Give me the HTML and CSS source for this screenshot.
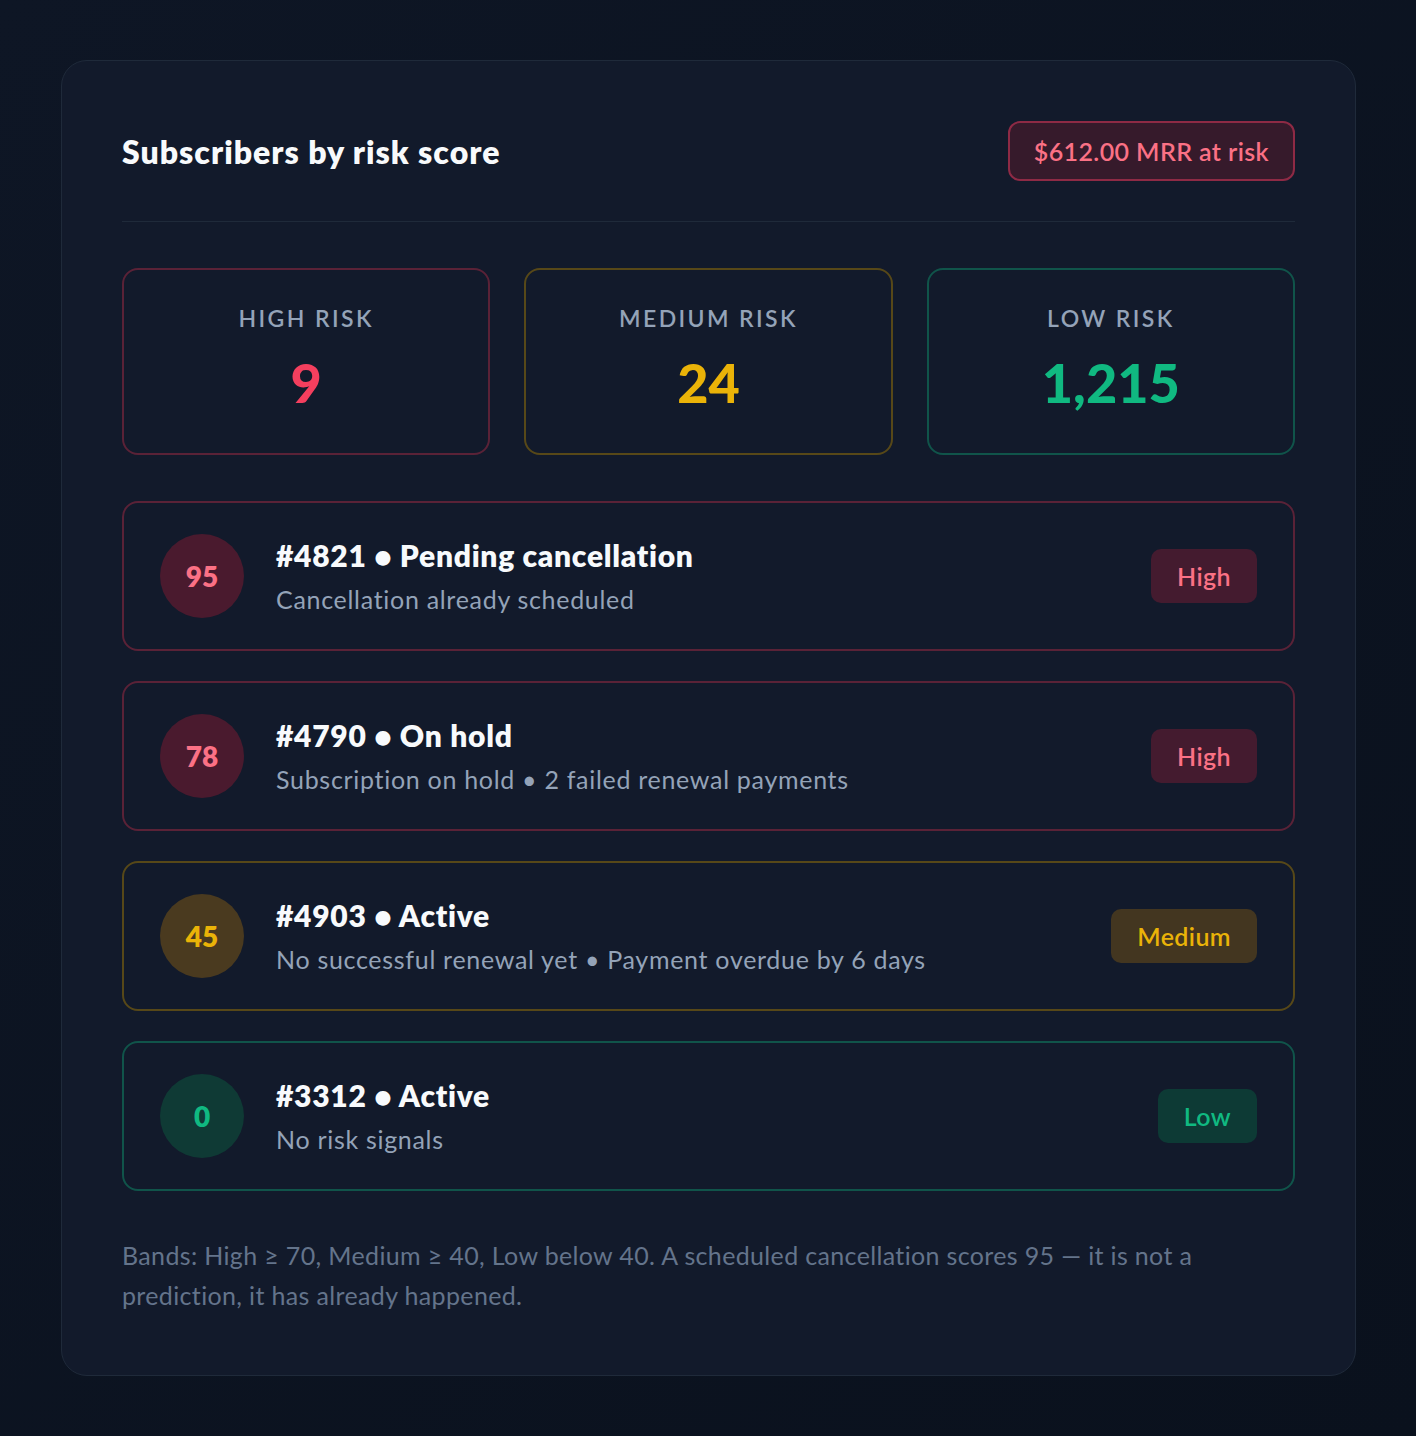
FILE: index.html
```html
<html>
<head>
  <meta charset="utf-8">
  <title>Subscribers by risk score</title>
  <link rel="stylesheet" href="styles.css">
</head>
<body>
<div class="panel">
  <div class="panel-head">
    <h1>Subscribers by risk score</h1>
    <span class="mrr">$612.00 MRR at risk</span>
  </div>

  <div class="stats">
    <div class="stat high">
      <div class="stat-label">High risk</div>
      <div class="stat-value">9</div>
    </div>
    <div class="stat medium">
      <div class="stat-label">Medium risk</div>
      <div class="stat-value">24</div>
    </div>
    <div class="stat low">
      <div class="stat-label">Low risk</div>
      <div class="stat-value">1,215</div>
    </div>
  </div>

  <div class="subs">
    <div class="sub high">
      <div class="score">95</div>
      <div class="sub-info">
        <div class="sub-title">#4821 &bull; Pending cancellation</div>
        <div class="sub-reason">Cancellation already scheduled</div>
      </div>
      <span class="band">High</span>
    </div>
    <div class="sub high">
      <div class="score">78</div>
      <div class="sub-info">
        <div class="sub-title">#4790 &bull; On hold</div>
        <div class="sub-reason">Subscription on hold &bull; 2 failed renewal payments</div>
      </div>
      <span class="band">High</span>
    </div>
    <div class="sub medium">
      <div class="score">45</div>
      <div class="sub-info">
        <div class="sub-title">#4903 &bull; Active</div>
        <div class="sub-reason">No successful renewal yet &bull; Payment overdue by 6 days</div>
      </div>
      <span class="band">Medium</span>
    </div>
    <div class="sub low">
      <div class="score">0</div>
      <div class="sub-info">
        <div class="sub-title">#3312 &bull; Active</div>
        <div class="sub-reason">No risk signals</div>
      </div>
      <span class="band">Low</span>
    </div>
  </div>

  <p class="note">Bands: High &ge; 70, Medium &ge; 40, Low below 40. A scheduled cancellation scores 95 &mdash; it is not a prediction, it has already happened.</p>
</div>
</body>
</html>
```

FILE: styles.css
```css
body {
  margin: 0;
  padding: 60px 60px 60px 61px;
  background: linear-gradient(135deg, #0e1625 0%, #0a111d 100%);
  font-family: Lato, "Open Sans", sans-serif;
  color: #f1f5f9;
  min-height: 1436px;
  box-sizing: border-box;
}
.panel {
  background-color: #121a2b;
  border: 1px solid #1f2a3a;
  border-radius: 26px;
  padding: 60px;
}
.panel-head {
  display: flex;
  align-items: center;
  justify-content: space-between;
  padding-bottom: 40px;
  border-bottom: 1px solid #1f2a3a;
}
.panel-head h1 {
  margin: 0;
  font-size: 32px;
  font-weight: 800;
  letter-spacing: 1px;
  color: #f8fafc;
}
.mrr {
  font-size: 25px;
  font-weight: 600;
  letter-spacing: 0.4px;
  color: #fb7185;
  background-color: #361a2b;
  border: 2px solid #8e2a45;
  border-radius: 12px;
  padding: 13px 24px;
}
.stats {
  display: grid;
  grid-template-columns: repeat(3, 1fr);
  gap: 34px;
  margin-top: 46px;
}
.stat {
  height: 187px;
  box-sizing: border-box;
  border: 2px solid;
  border-radius: 16px;
  text-align: center;
  padding-top: 34px;
}
.stat-label {
  font-size: 23px;
  font-weight: 600;
  letter-spacing: 2.4px;
  text-transform: uppercase;
  color: #94a3b8;
}
.stat-value {
  font-size: 54px;
  font-weight: 900;
  margin-top: 18px;
}
.stat.high { border-color: #5a2237; }
.stat.high .stat-value { color: #f43f5e; }
.stat.medium { border-color: #574818; }
.stat.medium .stat-value { color: #eab308; }
.stat.low { border-color: #10544a; }
.stat.low .stat-value { color: #10b981; }

.subs {
  display: flex;
  flex-direction: column;
  gap: 30px;
  margin-top: 46px;
}
.sub {
  display: flex;
  align-items: center;
  border: 2px solid;
  border-radius: 16px;
  padding: 31px 36px;
}
.score {
  width: 84px;
  height: 84px;
  border-radius: 50%;
  flex-shrink: 0;
  display: flex;
  align-items: center;
  justify-content: center;
  font-size: 28px;
  font-weight: 800;
  margin-right: 32px;
}
.sub-info {
  flex: 1;
}
.sub-title {
  font-size: 30px;
  font-weight: 800;
  letter-spacing: 0.7px;
  line-height: 34px;
  color: #f8fafc;
}
.sub-reason {
  font-size: 25px;
  letter-spacing: 0.7px;
  color: #94a3b8;
  margin-top: 12px;
}
.band {
  font-size: 25px;
  font-weight: 600;
  letter-spacing: 0.4px;
  padding: 12px 26px;
  border-radius: 10px;
}
.sub.high { border-color: #5a2237; }
.sub.high .score { background-color: #4a1a2e; color: #fb7185; }
.sub.high .band { background-color: #441b2f; color: #fb7185; }
.sub.medium { border-color: #574818; }
.sub.medium .score { background-color: #4a3a1f; color: #eab308; }
.sub.medium .band { background-color: #433620; color: #eab308; }
.sub.low { border-color: #10544a; }
.sub.low .score { background-color: #0f3a35; color: #10b981; }
.sub.low .band { background-color: #0d3a35; color: #10b981; }

.note {
  margin: 44px 0 0;
  font-size: 25px;
  letter-spacing: 0.35px;
  line-height: 40px;
  color: #64748b;
  max-width: 1100px;
}
```
